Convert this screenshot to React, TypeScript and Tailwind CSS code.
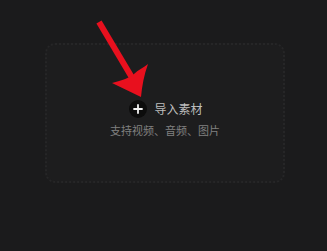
import React from "react";

function PlusIcon() {
  return (
    <span className="flex h-[18px] w-[18px] items-center justify-center rounded-full bg-[#0c0c0c]">
      <svg width="10" height="10" viewBox="0 0 10 10">
        <path d="M5 1v8M1 5h8" stroke="#f2f2f2" strokeWidth="1.8" strokeLinecap="round" />
      </svg>
    </span>
  );
}

export default function App() {
  return (
    <div
      className="relative h-[251px] w-[327px] overflow-hidden bg-[#1b1b1c]"
      style={{ fontFamily: '"Noto Sans CJK SC", "Noto Sans", sans-serif' }}
    >
      <div className="ml-[45px] mt-[43px] flex h-[140px] w-[240px] flex-col items-center rounded-[10px] border-2 border-dotted border-[#262627] bg-[#1d1d1e] pt-[55px]">
        <div className="flex items-center gap-[7px] pl-[2px]">
          <PlusIcon />
          <span className="text-[12px] leading-[18px] text-[#bdbdbd]">导入素材</span>
        </div>
        <p className="mt-[4px] text-[11px] leading-[16px] text-[#808080]">支持视频、音频、图片</p>
      </div>

      {/* red arrow pointing at the import button */}
      <svg className="absolute left-0 top-0" width="327" height="251" viewBox="0 0 327 251">
        <path d="M99 22L134 81" stroke="#e8101e" strokeWidth="6" strokeLinecap="butt" />
        <path d="M141 97L112 83C122 80 130 78 134 74C138 70 143 68 148 64C144 75 142 86 141 97Z" fill="#e8101e" />
      </svg>
    </div>
  );
}
